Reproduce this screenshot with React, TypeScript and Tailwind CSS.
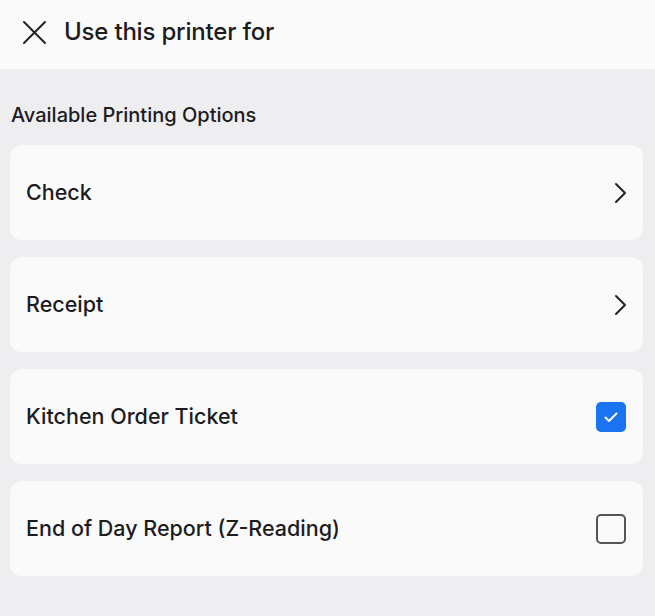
import type React from "react";

type Option = {
    label: string;
    kind: "link" | "checked" | "unchecked";
};

const options: Option[] = [
    { label: "Check", kind: "link" },
    { label: "Receipt", kind: "link" },
    { label: "Kitchen Order Ticket", kind: "checked" },
    { label: "End of Day Report (Z-Reading)", kind: "unchecked" },
];

const Chevron: React.FC = () => (
    <svg width="14" height="22" viewBox="0 0 14 22" fill="none">
        <path
            d="M3 2l9 9-9 9"
            stroke="#222"
            strokeWidth="2"
            strokeLinecap="round"
            strokeLinejoin="round"
        />
    </svg>
);

const OptionRow: React.FC<{ option: Option }> = ({ option }) => (
    <div className="flex h-[95px] items-center justify-between rounded-xl bg-[#fafafa] pl-[16px] pr-[17px]">
        <span className="text-[21.5px] font-medium text-[#1c1c1e]">
            {option.label}
        </span>
        {option.kind === "link" && (
            <div className="mr-[-1px]">
                <Chevron />
            </div>
        )}
        {option.kind === "checked" && (
            <div className="flex h-[30px] w-[30px] items-center justify-center rounded-[5px] bg-[#1a73f0]">
                <svg width="18" height="18" viewBox="0 0 18 18" fill="none">
                    <path
                        d="M3.5 9.5l3.5 3.5 7.5-7.5"
                        stroke="white"
                        strokeWidth="2"
                        strokeLinecap="round"
                        strokeLinejoin="round"
                    />
                </svg>
            </div>
        )}
        {option.kind === "unchecked" && (
            <div className="h-[30px] w-[30px] rounded-[5px] border-2 border-[#555]" />
        )}
    </div>
);

export default function App() {
    return (
        <div
            className="min-h-[616px] bg-[#eeeef1] text-[#1c1c1e]"
            style={{ fontFamily: "Inter, 'Noto Sans', sans-serif" }}
        >
            <header className="flex h-[69px] items-center gap-[17px] bg-[#fafafa] pb-[5px] pl-[22px]">
                <svg width="25" height="25" viewBox="0 0 25 25" fill="none">
                    <path
                        d="M2 2l21 21M23 2L2 23"
                        stroke="#222"
                        strokeWidth="2"
                        strokeLinecap="round"
                    />
                </svg>
                <h1 className="text-[24px] font-medium tracking-[-0.2px]">
                    Use this printer for
                </h1>
            </header>
            <main className="pl-[10px] pr-[12px] pt-[32px]">
                <h2 className="mb-[16px] pl-[1px] text-[20px] font-medium leading-[28px]">
                    Available Printing Options
                </h2>
                <div className="flex flex-col gap-[17px]">
                    {options.map((o) => (
                        <OptionRow key={o.label} option={o} />
                    ))}
                </div>
            </main>
        </div>
    );
}
